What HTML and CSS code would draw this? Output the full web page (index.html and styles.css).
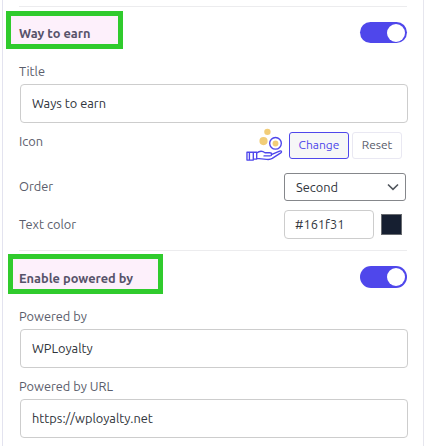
FILE: index.html
```
<!DOCTYPE html>
<html lang="en">
<head>
    <meta charset="UTF-8">
    <meta name="viewport" content="width=device-width, initial-scale=1.0">
    <title>Ways to earn settings</title>
    <link rel="stylesheet" href="styles.css">
</head>
<body>
    <div class="panel">
        <div class="section">
            <div class="section-head">
                <span class="section-title title-earn">Way to earn</span>
                <span class="toggle"></span>
            </div>
            <label class="field-label" for="title">Title</label>
            <input class="text-input" type="text" id="title" value="Ways to earn">

            <div class="row icon-row">
                <span class="row-label">Icon</span>
                <div class="controls">
                    <svg class="hand-icon" width="37" height="36" viewBox="0 0 38 36" fill="none" stroke="#4f47eb" stroke-width="1.4" stroke-linejoin="round" stroke-linecap="round">
                        <g fill="#f2cd78" stroke="none">
                            <circle cx="22" cy="4.5" r="3.3"/>
                            <circle cx="18" cy="14" r="4.2"/>
                            <circle cx="30.3" cy="16.5" r="3"/>
                        </g>
                        <circle cx="30.3" cy="16.3" r="6"/>
                        <path d="M1 25.5h6.5v8H1zM3.5 25.5v8M7.5 25.5h3.5v7H7.5M11 26.3c3-2.500 6-2.300 8.500-.3h5c2.500 0 2.600 3 0 3.200H18.500M26 28l8.500-3.700c2-.7 2.700.7 1.200 1.800l-8.700 5.700c-2 1.200-4 1.200-6 .9L11 31.700"/>
                    </svg>
                    <button class="btn btn-change">Change</button>
                    <button class="btn btn-reset">Reset</button>
                </div>
            </div>

            <div class="row order-row">
                <span class="row-label">Order</span>
                <div class="select">
                    <span>Second</span>
                    <svg width="12" height="8" viewBox="0 0 12 8" fill="none" stroke="#50555c" stroke-width="1.6">
                        <path d="M1 1.500L6 6.300l5-4.800"/>
                    </svg>
                </div>
            </div>

            <div class="row color-row">
                <span class="row-label">Text color</span>
                <div class="controls">
                    <input class="text-input color-input" type="text" value="#161f31">
                    <span class="swatch"></span>
                </div>
            </div>
        </div>

        <div class="section">
            <div class="section-head head-powered">
                <span class="section-title title-powered">Enable powered by</span>
                <span class="toggle toggle-tall"></span>
            </div>
            <label class="field-label" for="powered">Powered by</label>
            <input class="text-input" type="text" id="powered" value="WPLoyalty">
            <label class="field-label label-url" for="url">Powered by URL</label>
            <input class="text-input" type="text" id="url" value="https://wployalty.net">
        </div>
    </div>
</body>
</html>
```
FILE: styles.css
```
*,
*::before,
*::after {
    box-sizing: border-box;
}

body {
    margin: 0;
    background: #fff;
    font-family: Ubuntu, "Noto Sans", sans-serif;
    font-size: 12.8px;
    color: #5a5d6b;
}

.panel {
    width: 422px;
    height: 446px;
    margin-left: 2px;
    padding: 6px 15px 0 16px;
    border-left: 1px solid #e3e3ef;
    border-right: 1px solid #e6e6ee;
    overflow: hidden;
}

.section {
    width: 389px;
}

.section::before {
    content: "";
    display: block;
    width: 388px;
    height: 1px;
    background: #ececee;
}

.section-head {
    display: flex;
    align-items: center;
    justify-content: space-between;
    width: 388px;
    height: 51px;
    margin-bottom: 1px;
}

.head-powered {
    height: 52px;
}

.section-title {
    position: relative;
    font-weight: 700;
    line-height: 19px;
    padding-top: 1px;
    color: #57536a;
    white-space: nowrap;
}

/* green marker drawn around the section titles */
.section-title::before {
    content: "";
    position: absolute;
    z-index: -1;
    border: 5px solid #30cb2d;
    background: #fdf0fb;
}

.title-earn::before {
    left: -13px;
    top: -12px;
    width: 117px;
    height: 38px;
}

.title-powered {
    padding-top: 3px;
}

.title-powered::before {
    left: -11px;
    top: -12px;
    width: 155px;
    height: 40px;
}

.toggle {
    display: flex;
    align-items: center;
    justify-content: flex-end;
    width: 47px;
    height: 21px;
    padding-right: 2px;
    border-radius: 11px;
    background: #4f47eb;
}

.toggle-tall {
    height: 22px;
}

.toggle::after {
    content: "";
    width: 18px;
    height: 18px;
    border-radius: 50%;
    background: #fff;
}

.field-label {
    display: block;
    height: 25px;
    line-height: 25px;
}

.label-url {
    height: 31px;
    padding-top: 6px;
}

.text-input {
    display: block;
    width: 388px;
    height: 39px;
    margin: 0 0 0 1px;
    padding: 0 11px 2px;
    border: 1px solid #cdcdcd;
    border-radius: 4px;
    background: #fff;
    font: inherit;
    color: #2f343b;
    outline: none;
}

.row {
    display: flex;
    align-items: center;
    justify-content: space-between;
}

.icon-row {
    height: 44px;
    padding-right: 6px;
}

.icon-row .row-label {
    margin-top: -8px;
}

.order-row {
    height: 39px;
    padding-right: 2px;
}

.order-row .row-label {
    margin-top: -1px;
}

.color-row {
    height: 36px;
    margin-bottom: 8px;
    padding-right: 6px;
}

.controls {
    display: flex;
    align-items: center;
}

.hand-icon {
    margin-right: 6px;
}

.btn {
    height: 27px;
    padding: 0 0 2px;
    border-radius: 3px;
    background: #fff;
    font: inherit;
    font-size: 12px;
}

.btn-change {
    width: 60px;
    margin-right: 3px;
    border: 1px solid #4f47eb;
    background: #f6f7f7;
    color: #4f47eb;
}

.btn-reset {
    width: 50px;
    border: 1px solid #e9e8f2;
    color: #5a5d6b;
}

.select {
    display: flex;
    align-items: center;
    justify-content: space-between;
    width: 122px;
    height: 28px;
    padding: 0 6px 0 11px;
    border: 1px solid #85878b;
    border-radius: 3px;
    color: #2f343b;
}

.color-input {
    width: 90px;
    height: 29px;
    margin: 0 7px 0 0;
    padding: 0 10px;
}

.swatch {
    width: 21px;
    height: 21px;
    border: 1px solid #686b70;
    background: #161f31;
}
```
